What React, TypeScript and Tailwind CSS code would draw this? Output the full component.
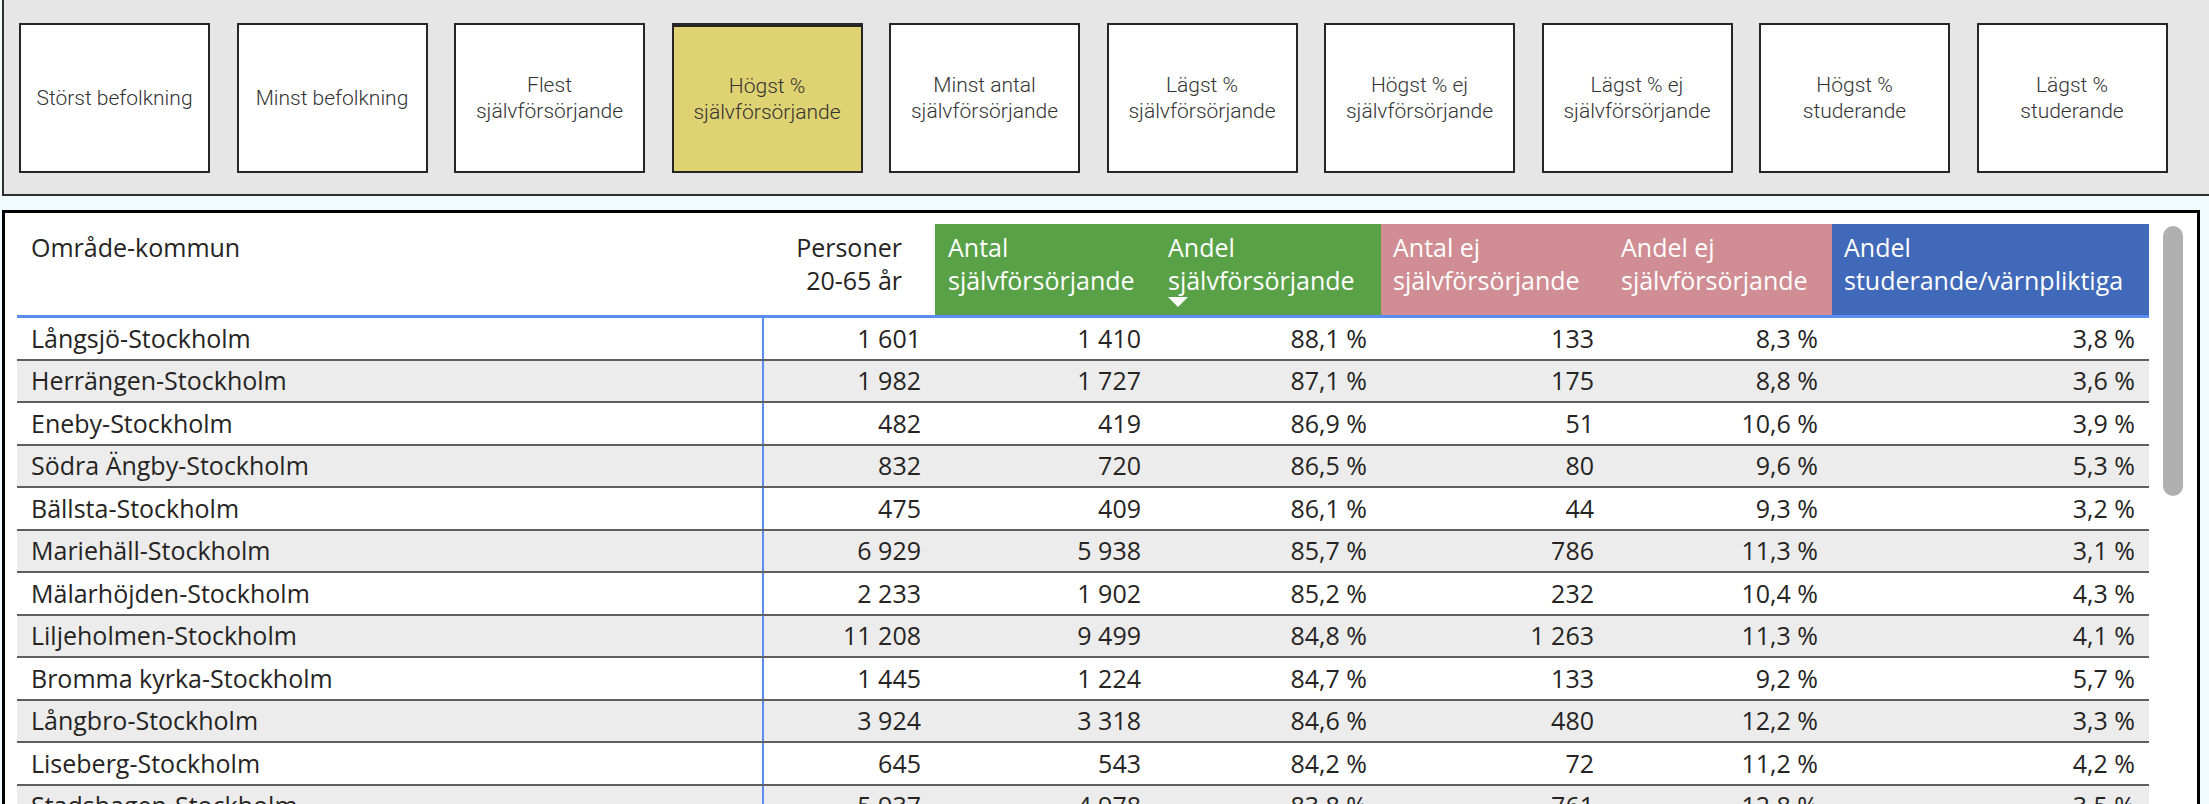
import React from "react";

const buttons: { label: string[]; active?: boolean }[] = [
  { label: ["Störst befolkning"] },
  { label: ["Minst befolkning"] },
  { label: ["Flest", "självförsörjande"] },
  { label: ["Högst %", "självförsörjande"], active: true },
  { label: ["Minst antal", "självförsörjande"] },
  { label: ["Lägst %", "självförsörjande"] },
  { label: ["Högst % ej", "självförsörjande"] },
  { label: ["Lägst % ej", "självförsörjande"] },
  { label: ["Högst %", "studerande"] },
  { label: ["Lägst %", "studerande"] },
];

const rows: string[][] = [
  ["Långsjö-Stockholm", "1 601", "1 410", "88,1 %", "133", "8,3 %", "3,8 %"],
  ["Herrängen-Stockholm", "1 982", "1 727", "87,1 %", "175", "8,8 %", "3,6 %"],
  ["Eneby-Stockholm", "482", "419", "86,9 %", "51", "10,6 %", "3,9 %"],
  ["Södra Ängby-Stockholm", "832", "720", "86,5 %", "80", "9,6 %", "5,3 %"],
  ["Bällsta-Stockholm", "475", "409", "86,1 %", "44", "9,3 %", "3,2 %"],
  ["Mariehäll-Stockholm", "6 929", "5 938", "85,7 %", "786", "11,3 %", "3,1 %"],
  ["Mälarhöjden-Stockholm", "2 233", "1 902", "85,2 %", "232", "10,4 %", "4,3 %"],
  ["Liljeholmen-Stockholm", "11 208", "9 499", "84,8 %", "1 263", "11,3 %", "4,1 %"],
  ["Bromma kyrka-Stockholm", "1 445", "1 224", "84,7 %", "133", "9,2 %", "5,7 %"],
  ["Långbro-Stockholm", "3 924", "3 318", "84,6 %", "480", "12,2 %", "3,3 %"],
  ["Liseberg-Stockholm", "645", "543", "84,2 %", "72", "11,2 %", "4,2 %"],
  ["Stadshagen-Stockholm", "5 937", "4 978", "83,8 %", "761", "12,8 %", "3,5 %"],
];

const GRID = "grid grid-cols-[747px_171px_220px_226px_227px_224px_317px]";

export default function App() {
  return (
    <div className="h-[804px] w-[2209px] overflow-hidden bg-[#f0fbfd]">
      {/* Slicer panel */}
      <div className="ml-[2px] h-[196px] bg-[#e6e6e6] border-l-2 border-b-2 border-[#2e2e2e] pl-[15px] pt-[23px]">
        <div className="flex gap-[26.5px]">
          {buttons.map((b, i) => (
            <div
              key={i}
              className={
                "w-[191px] h-[150px] flex flex-col items-center justify-center text-center border-2 border-[#262626] font-['Roboto',sans-serif] font-light text-[21px] leading-[26px] text-[#333333] " +
                (b.active ? "bg-[#dfd272] border-t-4" : "bg-white")
              }
            >
              {b.label.map((l, j) => (
                <span key={j}>{l}</span>
              ))}
            </div>
          ))}
        </div>
      </div>

      {/* Table panel */}
      <div className="ml-[2px] mt-[14px] w-[2198px] h-[620px] bg-white border-[3px] border-black pl-[12px] pt-[11px] flex font-['Segoe_UI','Open_Sans',sans-serif] text-[25px] text-[#252423]">
        <div className="w-[2132px]">
          {/* Header */}
          <div className={GRID + " h-[94px] border-b-[3px] border-[#5b8def] leading-[33px]"}>
            <div className="bg-white pl-[14px] pt-[7px]">Område-kommun</div>
            <div className="bg-white pr-[33px] pt-[7px] text-right">
              Personer
              <br />
              20-65 år
            </div>
            <div className="bg-[#59a147] text-white pl-[13px] pt-[7px]">
              Antal
              <br />
              självförsörjande
            </div>
            <div className="bg-[#59a147] text-white pl-[13px] pt-[7px]">
              Andel
              <br />
              självförsörjande
              <svg width="20" height="10" viewBox="0 0 20 10" className="block">
                <polygon points="0,0 20,0 10,10" fill="#ffffff" />
              </svg>
            </div>
            <div className="bg-[#d08d94] text-white pl-[12px] pt-[7px]">
              Antal ej
              <br />
              självförsörjande
            </div>
            <div className="bg-[#d08d94] text-white pl-[13px] pt-[7px]">
              Andel ej
              <br />
              självförsörjande
            </div>
            <div className="bg-[#4169b9] text-white pl-[12px] pt-[7px]">
              Andel
              <br />
              studerande/värnpliktiga
            </div>
          </div>
          {/* Rows */}
          {rows.map((r, i) => (
            <div
              key={i}
              className={
                GRID +
                " h-[42.5px] border-b-2 border-[#5f5f5f] " +
                (i % 2 === 1 ? "bg-[#ececec]" : "bg-white")
              }
            >
              <div className="pl-[14px] flex items-center border-r-2 border-[#5b8def] whitespace-nowrap">
                {r[0]}
              </div>
              {r.slice(1).map((v, j) => (
                <div key={j} className="pr-[14px] flex items-center justify-end whitespace-nowrap">
                  {v}
                </div>
              ))}
            </div>
          ))}
        </div>
        {/* Scrollbar */}
        <div className="ml-[14px] mt-[2px] w-[20px] h-[270px] rounded-full bg-[#b0b0b0]" />
      </div>
    </div>
  );
}
